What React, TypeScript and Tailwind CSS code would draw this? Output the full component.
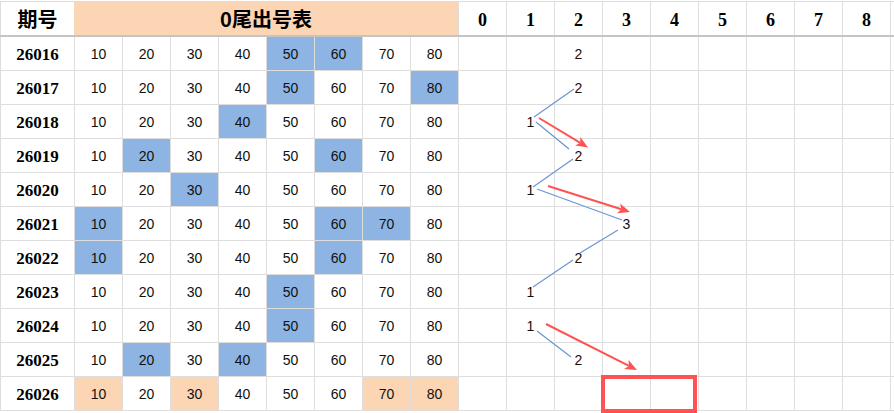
import React from "react";

const BLUE = "bg-[#8db4e2]";
const PEACH = "bg-[#fcd5b4]";

type Row = { id: string; hl: number[]; peach?: boolean; pick: number | null };

const rows: Row[] = [
  { id: "26016", hl: [50, 60], pick: 2 },
  { id: "26017", hl: [50, 80], pick: 2 },
  { id: "26018", hl: [40], pick: 1 },
  { id: "26019", hl: [20, 60], pick: 2 },
  { id: "26020", hl: [30], pick: 1 },
  { id: "26021", hl: [10, 60, 70], pick: 3 },
  { id: "26022", hl: [10, 60], pick: 2 },
  { id: "26023", hl: [50], pick: 1 },
  { id: "26024", hl: [50], pick: 1 },
  { id: "26025", hl: [20, 40], pick: 2 },
  { id: "26026", hl: [10, 30, 70, 80], peach: true, pick: null },
];

const nums = [10, 20, 30, 40, 50, 60, 70, 80];
const digits = [0, 1, 2, 3, 4, 5, 6, 7, 8];

const gridCols = "grid grid-cols-[73px_repeat(17,47px)_4px] gap-x-px pl-px";
const dataFont = { fontFamily: '"Liberation Sans", Arial, sans-serif' };
const serifFont = { fontFamily: '"Liberation Serif", "Times New Roman", serif' };
const cjkFont = { fontFamily: '"Noto Sans CJK SC", "Noto Sans", sans-serif' };

function Arrow({ x1, y1, x2, y2 }: { x1: number; y1: number; x2: number; y2: number }) {
  const dx = x2 - x1;
  const dy = y2 - y1;
  const len = Math.hypot(dx, dy);
  const ux = dx / len;
  const uy = dy / len;
  const nx = -uy;
  const ny = ux;
  const hl = 12;
  const hw = 5;
  const bx = x2 - ux * hl;
  const by = y2 - uy * hl;
  const notchX = x2 - ux * (hl - 3);
  const notchY = y2 - uy * (hl - 3);
  const pts = `${x2},${y2} ${bx + nx * hw},${by + ny * hw} ${notchX},${notchY} ${bx - nx * hw},${by - ny * hw}`;
  return (
    <g>
      <line x1={x1} y1={y1} x2={notchX} y2={notchY} stroke="#ff5353" strokeWidth={2} />
      <polygon points={pts} fill="#ff5353" />
    </g>
  );
}

export default function App() {
  return (
    <div className="relative w-[894px] h-[413px] overflow-hidden bg-white">
      <div className="flex flex-col bg-[#dedede]">
        <div className="h-px bg-white" />
        <div className="h-px" />
        {/* header */}
        <div className={`${gridCols} h-[33px]`}>
          <div className="bg-white flex items-center justify-center text-[20px] font-bold text-black" style={cjkFont}>
            期号
          </div>
          <div
            className={`col-span-8 ${PEACH} -ml-px flex items-center justify-center text-[20px] font-bold text-black`}
            style={cjkFont}
          >
            0尾出号表
          </div>
          {digits.map((d) => (
            <div
              key={d}
              className="bg-white flex items-center justify-center pt-[3px] text-[18px] font-bold text-black"
              style={serifFont}
            >
              {d}
            </div>
          ))}
          <div className="bg-white" />
        </div>
        <div className="h-[2px] bg-[#c4c4c4]" />
        {rows.map((r, i) => (
          <React.Fragment key={r.id}>
            <div className={`${gridCols} h-[33px]`}>
              <div
                className="bg-white flex items-center justify-center pt-[2px] text-[17px] font-bold text-black"
                style={serifFont}
              >
                {r.id}
              </div>
              {nums.map((n) => {
                const on = r.hl.includes(n);
                const bg = on ? (r.peach ? PEACH : BLUE) : "bg-white";
                return (
                  <div
                    key={n}
                    className={`${bg} flex items-center justify-center pt-px text-[14px] text-[#111]`}
                    style={dataFont}
                  >
                    {n}
                  </div>
                );
              })}
              {digits.map((d) => (
                <div
                  key={d}
                  className="bg-white flex items-center justify-center pt-px text-[14px] text-[#111]"
                  style={dataFont}
                >
                  {r.pick === d ? d : ""}
                </div>
              ))}
              <div className="bg-white" />
            </div>
            {i < rows.length ? <div className="h-px" /> : null}
          </React.Fragment>
        ))}
        <div className="h-[2px] bg-white" />
      </div>

      <svg className="absolute left-0 top-0 pointer-events-none" width={894} height={413} viewBox="0 0 894 413">
        <g stroke="#6a96d2" strokeWidth={1.2} fill="none">
          <line x1={574} y1={89} x2={534} y2={117} />
          <line x1={536} y1={122} x2={569} y2={149} />
          <line x1={573} y1={159} x2={533} y2={187} />
          <line x1={537} y1={189} x2={622} y2={220} />
          <line x1={618} y1={230} x2={580} y2={253} />
          <line x1={573} y1={260} x2={533} y2={287} />
          <line x1={537} y1={331} x2={571} y2={357} />
        </g>
        <Arrow x1={539} y1={118} x2={588} y2={147.5} />
        <Arrow x1={548} y1={186} x2={630} y2={212} />
        <Arrow x1={546} y1={324} x2={637} y2={370} />
        <rect x={603} y={377} width={92} height={34} fill="none" stroke="#ff5353" strokeWidth={4} />
      </svg>
    </div>
  );
}
